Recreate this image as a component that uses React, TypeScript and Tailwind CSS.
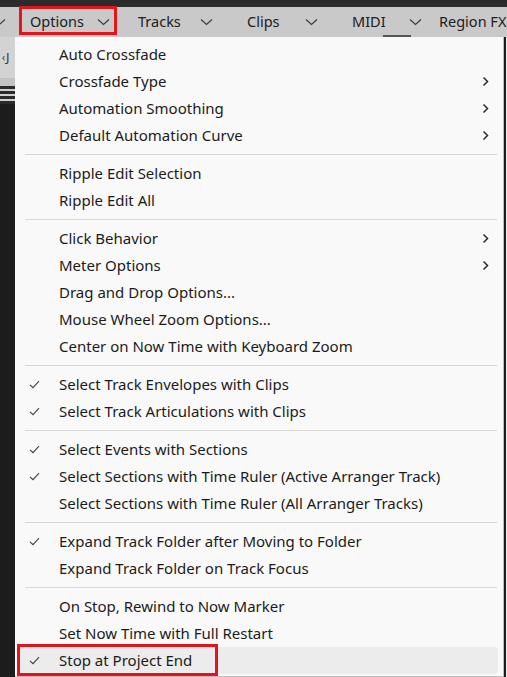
import React from 'react';

type Item = { label: string; checked?: boolean; submenu?: boolean; active?: boolean };

const groups: Item[][] = [
  [
    { label: 'Auto Crossfade' },
    { label: 'Crossfade Type', submenu: true },
    { label: 'Automation Smoothing', submenu: true },
    { label: 'Default Automation Curve', submenu: true },
  ],
  [{ label: 'Ripple Edit Selection' }, { label: 'Ripple Edit All' }],
  [
    { label: 'Click Behavior', submenu: true },
    { label: 'Meter Options', submenu: true },
    { label: 'Drag and Drop Options...' },
    { label: 'Mouse Wheel Zoom Options...' },
    { label: 'Center on Now Time with Keyboard Zoom' },
  ],
  [
    { label: 'Select Track Envelopes with Clips', checked: true },
    { label: 'Select Track Articulations with Clips', checked: true },
  ],
  [
    { label: 'Select Events with Sections', checked: true },
    { label: 'Select Sections with Time Ruler (Active Arranger Track)', checked: true },
    { label: 'Select Sections with Time Ruler (All Arranger Tracks)' },
  ],
  [
    { label: 'Expand Track Folder after Moving to Folder', checked: true },
    { label: 'Expand Track Folder on Track Focus' },
  ],
  [
    { label: 'On Stop, Rewind to Now Marker' },
    { label: 'Set Now Time with Full Restart' },
    { label: 'Stop at Project End', checked: true, active: true },
  ],
];

function Chevron() {
  return (
    <svg width="13" height="8" viewBox="0 0 13 8" className="shrink-0">
      <path d="M1 1.5 L6.5 6.5 L12 1.5" fill="none" stroke="#3a3a3a" strokeWidth="1.1" />
    </svg>
  );
}

function Check() {
  return (
    <svg width="11" height="9" viewBox="0 0 11 9">
      <path d="M1 4.8 L4 7.6 L10 1.2" fill="none" stroke="#404040" strokeWidth="1.1" />
    </svg>
  );
}

function SubArrow() {
  return (
    <svg width="7" height="11" viewBox="0 0 7 11">
      <path d="M1.5 1.5 L5.5 5.5 L1.5 9.5" fill="none" stroke="#2a2a2a" strokeWidth="1.5" />
    </svg>
  );
}

function MenuRow({ item }: { item: Item }) {
  return (
    <div
      className={`mx-[5px] flex h-[27px] items-center rounded-[4px] ${item.active ? 'bg-[#ececec]' : ''}`}
    >
      <div className="flex w-[39px] shrink-0 items-center pl-[9px]">
        {item.checked && <Check />}
      </div>
      <span className="flex-1 whitespace-nowrap">{item.label}</span>
      <div className="flex w-[16px] shrink-0 items-center">
        {item.submenu && <SubArrow />}
      </div>
    </div>
  );
}

export default function App() {
  return (
    <div
      className="relative flex h-[677px] w-[507px] flex-col overflow-hidden bg-[#1c1c1c] text-[#1b1b1b]"
      style={{ fontFamily: '"Noto Sans", "Open Sans", sans-serif' }}
    >
      {/* top window strip */}
      <div className="h-[7px] shrink-0 bg-[#2b2b2b]" />

      {/* menu bar */}
      <div className="flex h-[30px] shrink-0 items-center bg-[#c9c9c9] text-[14.5px] text-[#202020]">
        <div className="w-[20px] overflow-hidden">
          <div className="-ml-[7px]">
            <Chevron />
          </div>
        </div>
        <span className="ml-[10px] w-[67px]">Options</span>
        <Chevron />
        <span className="ml-[28px] w-[62px]">Tracks</span>
        <Chevron />
        <span className="ml-[34px] w-[58px]">Clips</span>
        <Chevron />
        <span className="relative ml-[34px] w-[57px]">
          MIDI
          <span className="absolute left-[31px] top-[24px] h-[2px] w-[28px] bg-[#555]" />
        </span>
        <Chevron />
        <span className="ml-[17px] whitespace-nowrap">Region FX</span>
      </div>

      <div className="flex min-h-0 flex-1">
        {/* left strip of the app behind the menu */}
        <div className="flex w-[15px] shrink-0 flex-col">
          <div className="flex h-[41px] items-center bg-[#d3d3d3] pl-[2px] text-[13px] text-[#333]">
            <span className="text-[10px]">‹</span>
            <span className="ml-[1px]">J</span>
          </div>
          <div className="h-[8px] bg-[#c2c2c2]" />
          <div className="flex flex-col gap-[3px] bg-[#2a2a2a] py-[3px]">
            <div className="h-[2px] bg-[#cfcfcf]" />
            <div className="h-[2px] bg-[#cfcfcf]" />
            <div className="h-[2px] bg-[#cfcfcf]" />
          </div>
          <div className="flex-1 bg-[#1c1c1c]" />
        </div>

        {/* dropdown menu */}
        <div className="mr-[2px] flex-1 border-r border-b border-[#bdbdbd] bg-[#f9f9f9] pt-[4px] pb-[1px] text-[15px]">
          {groups.map((g, gi) => (
            <div key={gi}>
              {gi > 0 && (
                <div className="flex h-[11px] items-center pl-[10px] pr-[6px]">
                  <div className="h-[1px] w-full bg-[#d8d8d8]" />
                </div>
              )}
              {g.map((item) => (
                <MenuRow key={item.label} item={item} />
              ))}
            </div>
          ))}
        </div>
        <div className="w-[1px] bg-[#eeeeee]" />
      </div>

      {/* annotation boxes */}
      <div className="pointer-events-none absolute left-[19px] top-[6px] h-[29px] w-[98px] border-[3px] border-[#e3141b]" />
      <div className="pointer-events-none absolute left-[17px] top-[644px] h-[32px] w-[201px] border-[3px] border-[#e3141b]" />
    </div>
  );
}
